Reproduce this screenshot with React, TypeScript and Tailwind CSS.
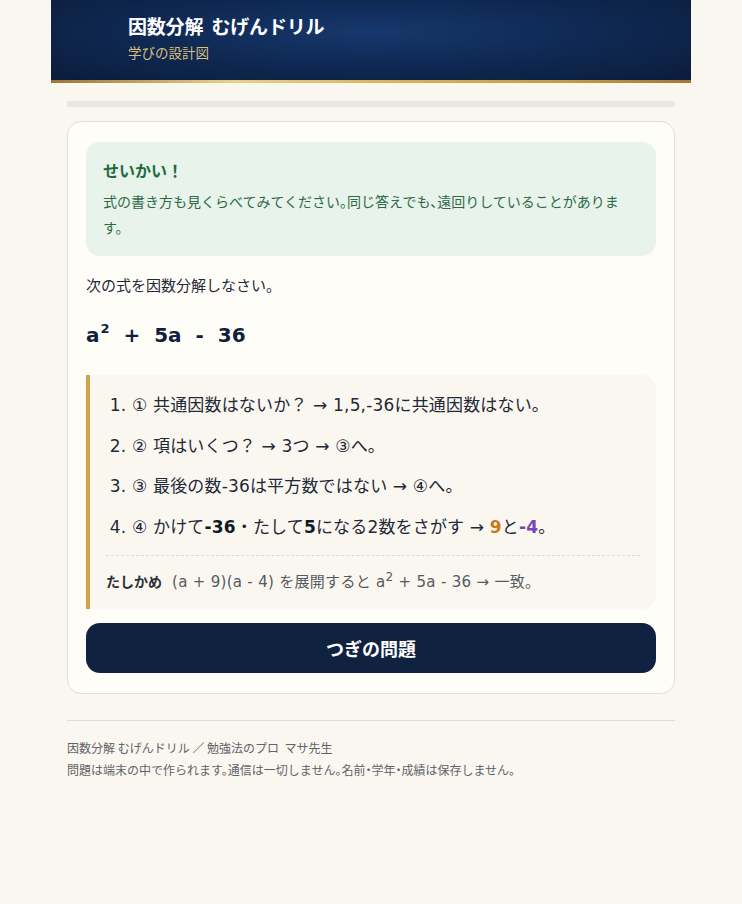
export default function App() {
  const jp = { fontFamily: '"Noto Sans CJK JP", "Noto Sans", sans-serif' };
  const mixed = { fontFamily: '"DejaVu Sans", "Noto Sans CJK JP", sans-serif' };
  return (
    <div className="min-h-screen bg-[#faf7f0] text-[#1f2937]" style={jp}>
      <div className="mx-auto w-[640px]">
        {/* Header */}
        <header className="bg-[radial-gradient(ellipse_at_50%_40%,#16386c_0%,#0f2a55_45%,#0b1c3b_100%)] h-[80px] pl-[77px] pt-[12px]">
          <h1 className="text-[19px] font-bold text-white leading-[28px] tracking-[-0.01em]">
            因数分解&nbsp;&nbsp;むげんドリル
          </h1>
          <p className="text-[13.5px] text-[#dcbf7c] leading-[20px] mt-[2px]">学びの設計図</p>
        </header>
        <div className="h-[3px] bg-[linear-gradient(90deg,#9a7634_0%,#e9cf86_28%,#d9b05a_55%,#c99a44_80%,#a07a34_100%)]" />

        <main className="px-4 pt-[18px]">
          <div className="h-[6px] rounded-full bg-[#e7e6e2]" />

          <div className="mt-[14px] rounded-[14px] border border-[#dcdde0] bg-[#fffdf8] px-[18px] pt-[20px] pb-[20px]">
            {/* Feedback */}
            <div className="rounded-[14px] bg-[#e8f3ec] px-[17px] pt-[15px] pb-[16px]">
              <p className="text-[16px] font-bold text-[#1f6b3c] leading-[26px]">せいかい！</p>
              <p className="mt-[5px] mr-[8px] text-[14px] text-[#2f6a47] leading-[26px] [font-feature-settings:'halt']">
                式の書き方も見くらべてみてください。同じ答えでも、遠回りしていることがあります。
              </p>
            </div>

            <p className="mt-[16px] text-[15px] leading-[26px]">次の式を因数分解しなさい。</p>

            <p className="mt-[22px] text-[20px] font-bold text-[#0f1f3d] leading-[30px]" style={mixed}>
              a<sup className="text-[13px] -top-[9px] ml-[1px]">2</sup>&nbsp;&nbsp;+&nbsp;&nbsp;5a&nbsp;&nbsp;-&nbsp;&nbsp;36
            </p>

            {/* Steps */}
            <div className="mt-[25px] rounded-r-[14px] border-l-4 border-[#d3a24b] bg-[#faf7f0] pl-[16px] pr-[16px] pt-[10px] pb-[14px]">
              <ol className="list-decimal pl-[26px] text-[17px] text-[#1f2937] leading-[40.5px] tracking-[0.01em]" style={mixed}>
                <li>① 共通因数はないか？ → 1,5,-36に共通因数はない。</li>
                <li>② 項はいくつ？ → 3つ → ③へ。</li>
                <li>③ 最後の数-36は平方数ではない → ④へ。</li>
                <li>
                  ④ かけて<b className="font-bold text-[#111827]">-36</b>・たして<b className="font-bold text-[#111827]">5</b>になる2数をさがす →{" "}
                  <b className="font-bold text-[#c7791c]">9</b>と<b className="font-bold text-[#7a44b0]">-4</b>。
                </li>
              </ol>
              <div className="mt-[8px] border-t border-dashed border-[#d9d9d6] pt-[12px] text-[15px] leading-[26px] text-[#555a60] tracking-[0.02em]" style={mixed}>
                <b className="font-bold text-[14px] tracking-normal text-[#2b2f36] mr-[10px]" style={jp}>たしかめ</b>(a + 9)(a - 4) を展開すると a
                <sup className="text-[12px]">2</sup> + 5a - 36 → 一致。
              </div>
            </div>

            <button className="mt-[14px] block w-full h-[50px] rounded-[14px] bg-[#0f2341] text-white text-[18px] font-bold">
              つぎの問題
            </button>
          </div>

          {/* Footer */}
          <footer className="mt-[26px] border-t border-[#dcdcda] pt-[16px] pb-10 text-[12px] leading-[22px] text-[#5f6368] [font-feature-settings:'halt']">
            <p>因数分解 むげんドリル ／ 勉強法のプロ&nbsp;&nbsp;マサ先生</p>
            <p>問題は端末の中で作られます。通信は一切しません。名前・学年・成績は保存しません。</p>
          </footer>
        </main>
      </div>
    </div>
  );
}
